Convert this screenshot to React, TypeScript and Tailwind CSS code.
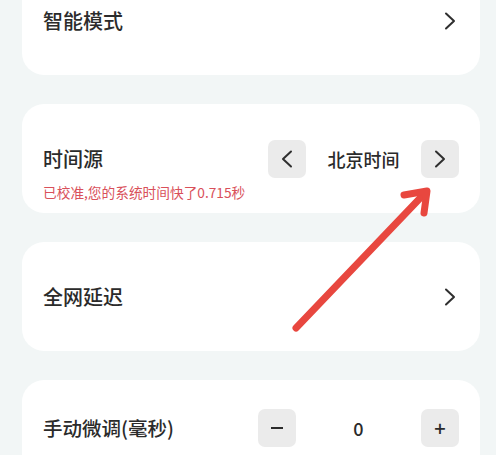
import React from "react";

const Chevron = ({ dir = "right", className = "" }: { dir?: "left" | "right"; className?: string }) => (
  <svg width="14" height="20" viewBox="0 0 14 20" className={className} fill="none">
    {dir === "right" ? (
      <path d="M3 2.5 L11 10 L3 17.5" stroke="#2f2f2f" strokeWidth="2" strokeLinecap="round" strokeLinejoin="round" />
    ) : (
      <path d="M11 2.5 L3 10 L11 17.5" stroke="#2f2f2f" strokeWidth="2" strokeLinecap="round" strokeLinejoin="round" />
    )}
  </svg>
);

const Btn = ({ children }: { children: React.ReactNode }) => (
  <div className="w-[38px] h-[38px] rounded-[7px] bg-[#ebebeb] flex items-center justify-center shrink-0">{children}</div>
);

export default function App() {
  return (
    <div
      className="relative w-[496px] h-[455px] overflow-hidden bg-[#f2f6f6]"
      style={{ fontFamily: '"Noto Sans CJK SC", "Noto Sans", sans-serif' }}
    >
      <div className="flex flex-col gap-[29px] pl-[22px] pr-[16px] mt-[-34px]">
        <div className="h-[109px] rounded-[22px] bg-white flex items-center justify-between pl-[21px] pr-[23px]">
          <span className="text-[20px] font-medium text-[#2b2b2b]">智能模式</span>
          <Chevron />
        </div>

        <div className="h-[109px] rounded-[22px] bg-white pl-[21px] pr-[21px] pt-[36px]">
          <div className="h-[38px] flex items-center">
            <span className="text-[20px] font-medium text-[#2b2b2b] flex-1">时间源</span>
            <Btn>
              <Chevron dir="left" />
            </Btn>
            <span className="w-[115px] text-center text-[18px] font-medium text-[#2b2b2b]">北京时间</span>
            <Btn>
              <Chevron />
            </Btn>
          </div>
          <div className="mt-[5px] text-[13.7px] leading-[18px] text-[#d9505a]">已校准,您的系统时间快了0.715秒</div>
        </div>

        <div className="h-[109px] rounded-[22px] bg-white flex items-center justify-between pl-[21px] pr-[23px]">
          <span className="text-[20px] font-medium text-[#2b2b2b]">全网延迟</span>
          <Chevron />
        </div>

        <div className="h-[109px] rounded-[22px] bg-white pl-[21px] pr-[21px] pt-[29px]">
          <div className="h-[38px] flex items-center">
            <span className="text-[19.5px] font-medium text-[#2b2b2b] flex-1">手动微调(毫秒)</span>
            <Btn>
              <span className="block w-[12px] h-[2px] bg-[#2b2b2b]" />
            </Btn>
            <span className="w-[125px] text-center text-[18px] font-medium text-[#2b2b2b]">0</span>
            <Btn>
              <span className="text-[20px] leading-none font-medium text-[#2b2b2b]">+</span>
            </Btn>
          </div>
        </div>
      </div>

      <svg className="absolute left-0 top-0 pointer-events-none" width="496" height="455" viewBox="0 0 496 455">
        <g stroke="#e8473f" strokeWidth="7" strokeLinecap="round" strokeLinejoin="round" fill="none">
          <path d="M296 328 L425 193" />
          <path d="M404 195 L427 191 L424 213" />
        </g>
      </svg>
    </div>
  );
}
